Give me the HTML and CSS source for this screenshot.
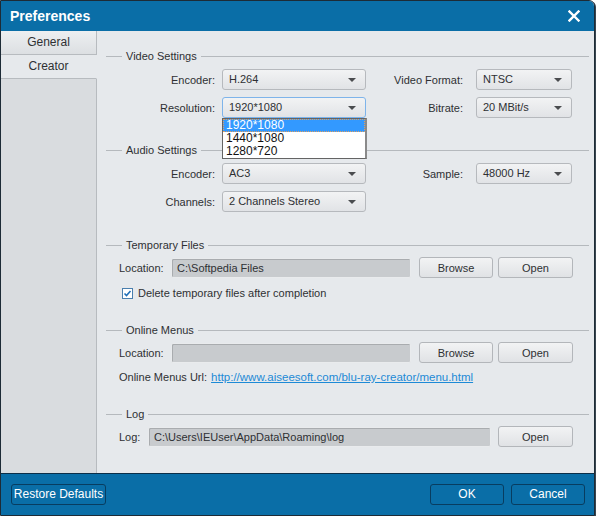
FILE: index.html
```html
<!DOCTYPE html>
<html lang="en">
<head>
    <meta charset="UTF-8">
    <title>Preferences</title>
    <link rel="stylesheet" href="styles.css">
</head>
<body>
    <div class="window">
        <div class="titlebar">
            <span class="title">Preferences</span>
            <svg class="close" width="12" height="12" viewBox="0 0 12 12">
                <path d="M1.5 1.5 L10.5 10.5 M10.5 1.5 L1.5 10.5" stroke="#fff" stroke-width="2.4" stroke-linecap="square"/>
            </svg>
        </div>

        <div class="main">
            <div class="sidebar">
                <div class="tab">General</div>
                <div class="tab active">Creator</div>
                <div class="sidebar-rest"></div>
            </div>

            <div class="content">
                <!-- video -->
                <div class="section first">
                    <div class="legend"><span>Video Settings</span></div>
                    <div class="grid">
                        <label>Encoder:</label>
                        <div class="select">H.264</div>
                        <label>Video Format:</label>
                        <div class="select small">NTSC</div>

                        <label>Resolution:</label>
                        <div class="select focus">1920*1080
                            <ul class="dropdown">
                                <li class="sel">1920*1080</li>
                                <li>1440*1080</li>
                                <li>1280*720</li>
                            </ul>
                        </div>
                        <label>Bitrate:</label>
                        <div class="select small">20 MBit/s</div>
                    </div>
                </div>

                <!-- audio -->
                <div class="section">
                    <div class="legend"><span>Audio Settings</span></div>
                    <div class="grid">
                        <label>Encoder:</label>
                        <div class="select">AC3</div>
                        <label>Sample:</label>
                        <div class="select small">48000 Hz</div>

                        <label>Channels:</label>
                        <div class="select">2 Channels Stereo</div>
                    </div>
                </div>

                <div class="section files temp">
                    <div class="legend"><span>Temporary Files</span></div>
                    <div class="row">
                        <span class="lbl">Location:</span>
                        <div class="field">C:\Softpedia Files</div>
                        <button class="btn browse">Browse</button>
                        <button class="btn">Open</button>
                    </div>
                    <div class="check-row">
                        <svg class="check" width="11" height="11" viewBox="0 0 11 11">
                            <rect x="0.5" y="0.5" width="10" height="10" fill="#fff" stroke="#4a7fae"/>
                            <path d="M2.5 5.5 L4.5 7.5 L8.5 3" fill="none" stroke="#1f6fb8" stroke-width="1.6"/>
                        </svg>
                        <span>Delete temporary files after completion</span>
                    </div>
                </div>

                <div class="section files">
                    <div class="legend"><span>Online Menus</span></div>
                    <div class="row">
                        <span class="lbl">Location:</span>
                        <div class="field"></div>
                        <button class="btn browse">Browse</button>
                        <button class="btn">Open</button>
                    </div>
                    <div class="url-row">
                        <span>Online Menus Url:</span>
                        <a href="#">http://www.aiseesoft.com/blu-ray-creator/menu.html</a>
                    </div>
                </div>

                <div class="section files">
                    <div class="legend"><span>Log</span></div>
                    <div class="row">
                        <span class="lbl log">Log:</span>
                        <div class="field wide">C:\Users\IEUser\AppData\Roaming\log</div>
                        <button class="btn">Open</button>
                    </div>
                </div>
            </div>
        </div>

        <div class="footer">
            <button class="dark-btn restore">Restore Defaults</button>
            <div class="footer-right">
                <button class="dark-btn">OK</button>
                <button class="dark-btn">Cancel</button>
            </div>
        </div>
    </div>
</body>
</html>
```

FILE: styles.css
```css
body {
    margin: 0;
    font-family: 'Liberation Sans', 'DejaVu Sans', sans-serif;
    font-size: 11px;
    color: #2e3033;
    background: #fff;
}

.window {
    width: 593px;
    height: 514px;
    border: 1px solid #1d2b36;
    border-top-right-radius: 6px;
    box-shadow: 1px 1px 0 #3a4650;
    overflow: hidden;
    display: flex;
    flex-direction: column;
    background: #e6e9ec;
}

/* title bar */
.titlebar {
    height: 30px;
    background: #0a6ea7;
    display: flex;
    align-items: center;
    justify-content: space-between;
    padding: 0 14px 0 9px;
    flex-shrink: 0;
}

.title {
    color: #fff;
    font-weight: bold;
    font-size: 14px;
}

.main {
    flex: 1;
    display: flex;
}

/* left tabs */
.sidebar {
    width: 95px;
    border-right: 1px solid #b7bbbf;
    display: flex;
    flex-direction: column;
    background: #d9dcdf;
    font-size: 12px;
}

.tab {
    height: 23px;
    line-height: 23px;
    text-align: center;
    background: linear-gradient(#edeff1, #dcdfe2);
    border-bottom: 1px solid #b7bbbf;
    margin-right: -1px;
    border-right: 1px solid #b7bbbf;
}

.tab.active {
    background: #e6e9ec;
    border-right-color: #e6e9ec;
}

.sidebar-rest {
    flex: 1;
}

/* right pane */
.content {
    flex: 1;
    padding-right: 5px;
}

.section {
    margin-top: 25px;
}

.section.first {
    margin-top: 18px;
}

.section.files {
    margin-top: 24px;
}

.section.temp {
    margin-top: 26px;
}

.legend {
    display: flex;
    align-items: center;
    height: 14px;
    margin-left: 9px;
    margin-bottom: 6px;
}

.files .legend {
    margin-bottom: 5px;
}

.legend::before {
    content: "";
    width: 16px;
    border-top: 1px solid #b5b9bd;
}

.legend::after {
    content: "";
    flex: 1;
    border-top: 1px solid #b5b9bd;
}

.legend span {
    padding: 0 4px;
}

.grid {
    display: grid;
    grid-template-columns: 125px 144px 104px 96px;
    row-gap: 7px;
    align-items: center;
}

.grid label {
    text-align: right;
    padding-right: 7px;
}

.grid .select.small {
    margin-left: 6px;
    width: 96px;
}

.select {
    position: relative;
    box-sizing: border-box;
    height: 21px;
    line-height: 19px;
    padding-left: 6px;
    border: 1px solid #b6b9bd;
    border-radius: 3px;
    background: linear-gradient(#f2f3f4, #e1e3e6);
}

.select::after {
    content: "";
    position: absolute;
    right: 9px;
    top: 8px;
    border-left: 4px solid transparent;
    border-right: 4px solid transparent;
    border-top: 4px solid #4a4c4f;
}

.select.focus {
    border-color: #7eb4ea;
}

.dropdown {
    position: absolute;
    left: -1px;
    top: 20px;
    width: 142px;
    margin: 0;
    padding: 0;
    list-style: none;
    background: #fff;
    border: 1px solid #646464;
    border-right: 2px solid #8a8a8a;
    z-index: 2;
    color: #111;
    font-size: 12px;
}

.dropdown li {
    height: 13px;
    line-height: 13px;
    padding-left: 3px;
}

.dropdown li.sel {
    background: #3399ff;
    color: #fff;
    outline: 1px dotted #e0a060;
    outline-offset: -1px;
}

/* rows with fields and buttons */
.row {
    display: flex;
    align-items: center;
    padding-left: 22px;
}

.lbl {
    width: 52px;
}

.lbl.log {
    width: 29px;
}

.field {
    box-sizing: border-box;
    width: 240px;
    height: 20px;
    line-height: 18px;
    padding-left: 5px;
    border: 1px solid #e9ebed;
    background: #c8cbce;
    box-shadow: inset 1px 1px 0 #a9acaf;
    border-radius: 2px;
}

.field.wide {
    width: 343px;
}

.btn {
    box-sizing: border-box;
    width: 75px;
    height: 21px;
    margin-left: 7px;
    font: inherit;
    color: #2e3033;
    border: 1px solid #b3b6ba;
    border-radius: 3px;
    background: linear-gradient(#f2f3f4, #e0e2e5);
    padding: 0;
}

.btn.browse {
    width: 74px;
    margin-left: 8px;
}

.btn.browse + .btn {
    margin-left: 5px;
}

.check-row {
    display: flex;
    align-items: center;
    gap: 5px;
    padding-left: 25px;
    margin-top: 9px;
}

.url-row {
    padding-left: 22px;
    margin-top: 8px;
    display: flex;
    gap: 4px;
}

.url-row a {
    color: #1d8ad6;
    font-size: 11.5px;
}

/* footer */
.footer {
    height: 40px;
    flex-shrink: 0;
    background: #0a6ea7;
    border-top: 1px solid #0b2f49;
    display: flex;
    align-items: center;
    justify-content: space-between;
    padding: 0 9px 1px 10px;
}

.footer-right {
    display: flex;
    gap: 7px;
}

.dark-btn {
    box-sizing: border-box;
    height: 21px;
    width: 74px;
    font: inherit;
    font-size: 12px;
    color: #fff;
    background: #0a6ea7;
    border: 1px solid #083d60;
    border-radius: 3px;
    padding: 0;
}

.dark-btn.restore {
    width: 95px;
}
```
